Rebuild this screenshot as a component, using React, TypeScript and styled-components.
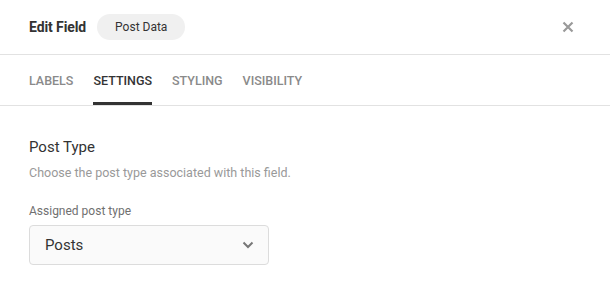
import React from "react";
import styled, { createGlobalStyle } from "styled-components";

const Global = createGlobalStyle`
  html, body { margin: 0; padding: 0; background: #fff; }
  body { font-family: Roboto, "Liberation Sans", Arial, sans-serif; color: #333; }
  * { box-sizing: border-box; }
`;

const Panel = styled.div`
  width: 610px;
  height: 285px;
  background: #fff;
  display: flex;
  flex-direction: column;
`;

const Header = styled.div`
  height: 55px;
  display: flex;
  align-items: center;
  padding: 0 29px;
  border-bottom: 1px solid #e2e2e2;
  gap: 11px;
`;

const Title = styled.div`
  font-size: 14px;
  font-weight: 700;
  color: #333;
  letter-spacing: -0.1px;
`;

const Pill = styled.div`
  height: 26px;
  padding: 0 18px;
  border-radius: 13px;
  background: #f0f0f0;
  display: flex;
  align-items: center;
  font-size: 12px;
  color: #333;
`;

const CloseBtn = styled.button`
  margin-left: auto;
  margin-right: 5px;
  border: 0;
  background: none;
  padding: 0;
  width: 16px;
  height: 16px;
  display: flex;
  align-items: center;
  justify-content: center;
  cursor: pointer;
`;

const Tabs = styled.div`
  display: flex;
  gap: 20px;
  padding: 0 29px;
  border-bottom: 1px solid #e2e2e2;
`;

const Tab = styled.div<{ $active?: boolean }>`
  font-size: 12.5px;
  font-weight: 500;
  text-transform: uppercase;
  color: ${(p) => (p.$active ? "#333" : "#8a8a8a")};
  padding: 18px 0 13px;
  line-height: 16px;
  border-bottom: 3px solid ${(p) => (p.$active ? "#333" : "transparent")};
`;

const Body = styled.div`
  padding: 32px 29px 0;
  display: flex;
  flex-direction: column;
`;

const SectionTitle = styled.div`
  font-size: 15px;
  line-height: 18px;
  color: #333;
`;

const Description = styled.div`
  margin-top: 9px;
  font-size: 12.5px;
  line-height: 16px;
  color: #999;
`;

const Label = styled.div`
  margin-top: 23px;
  font-size: 12px;
  line-height: 14px;
  color: #707070;
`;

const Select = styled.div`
  margin-top: 7px;
  width: 240px;
  height: 40px;
  border: 1px solid #dcdcdc;
  border-radius: 4px;
  background: #fafafa;
  display: flex;
  align-items: center;
  justify-content: space-between;
  padding: 0 14px 0 15px;
  font-size: 15px;
  color: #333;
`;

const X = () => (
  <svg width="12" height="12" viewBox="0 0 12 12">
    <path d="M1.5 1.5 L10.5 10.5 M10.5 1.5 L1.5 10.5" stroke="#9a9a9a" strokeWidth="2.2" strokeLinecap="butt" />
  </svg>
);

const Chevron = () => (
  <svg width="12" height="8" viewBox="0 0 12 8">
    <path d="M1.5 1.5 L6 6 L10.5 1.5" stroke="#777" strokeWidth="2" fill="none" />
  </svg>
);

export default function App() {
  return (
    <>
      <Global />
      <Panel>
        <Header>
          <Title>Edit Field</Title>
          <Pill>Post Data</Pill>
          <CloseBtn aria-label="Close">
            <X />
          </CloseBtn>
        </Header>
        <Tabs>
          <Tab>Labels</Tab>
          <Tab $active>Settings</Tab>
          <Tab>Styling</Tab>
          <Tab>Visibility</Tab>
        </Tabs>
        <Body>
          <SectionTitle>Post Type</SectionTitle>
          <Description>Choose the post type associated with this field.</Description>
          <Label>Assigned post type</Label>
          <Select>
            <span>Posts</span>
            <Chevron />
          </Select>
        </Body>
      </Panel>
    </>
  );
}
